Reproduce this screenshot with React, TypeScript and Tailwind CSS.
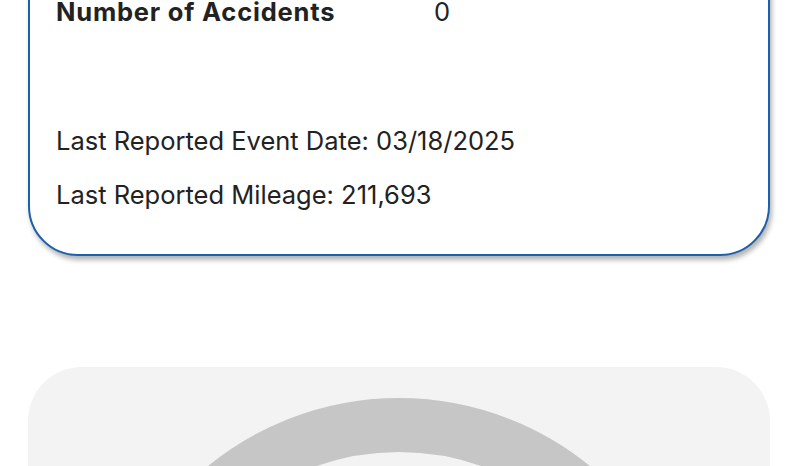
export default function App() {
  return (
    <div className="w-[798px] h-[466px] overflow-hidden bg-white font-['Inter',sans-serif] text-[#222222]">
      <div className="mx-[28px] mt-[-98px] rounded-[50px] border-2 border-[#1c5fab] bg-white px-[26px] pt-[93px] pb-[44px] shadow-[2px_4px_5px_rgba(0,0,0,0.3)]">
        <div className="flex items-center text-[25.5px] leading-[30px]">
          <span className="w-[378px] font-bold tracking-[0.8px]">Number of Accidents</span>
          <span>0</span>
        </div>
        <div className="mt-[99px] flex flex-col gap-[24px] text-[25.5px] leading-[30px]">
          <p>Last Reported Event Date: 03/18/2025</p>
          <p>Last Reported Mileage: 211,693</p>
        </div>
      </div>

      <div className="mx-[28px] mt-[111px] h-[200px] overflow-hidden rounded-[54px] bg-[#f3f3f3]">
        <svg width="742" height="200" viewBox="0 0 742 200" className="block">
          <circle cx="371" cy="333" r="275" fill="none" stroke="#c6c6c6" strokeWidth="54" />
        </svg>
      </div>
    </div>
  );
}
